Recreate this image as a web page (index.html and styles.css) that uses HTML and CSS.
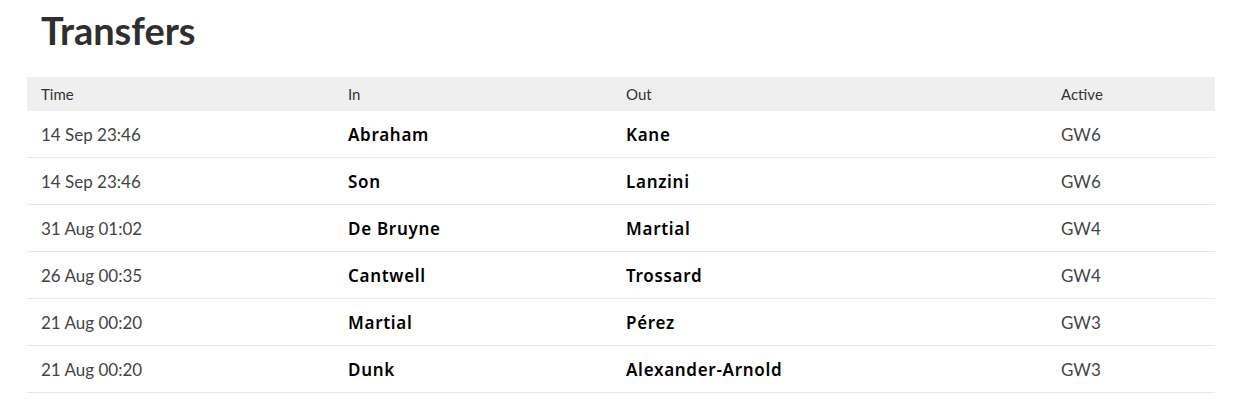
FILE: index.html
```html
<!DOCTYPE html>
<html>
<head>
<meta charset="utf-8">
<link rel="stylesheet" href="styles.css">
</head>
<body>
<div class="wrap">
  <h2 class="title">Transfers</h2>
  <table class="transfers">
    <colgroup>
      <col class="c-time"><col class="c-in"><col class="c-out"><col class="c-active">
    </colgroup>
    <thead>
      <tr><th>Time</th><th>In</th><th>Out</th><th>Active</th></tr>
    </thead>
    <tbody>
      <tr><td class="muted">14 Sep 23:46</td><td class="name">Abraham</td><td class="name">Kane</td><td class="muted">GW6</td></tr>
      <tr><td class="muted">14 Sep 23:46</td><td class="name">Son</td><td class="name">Lanzini</td><td class="muted">GW6</td></tr>
      <tr><td class="muted">31 Aug 01:02</td><td class="name">De Bruyne</td><td class="name">Martial</td><td class="muted">GW4</td></tr>
      <tr><td class="muted">26 Aug 00:35</td><td class="name">Cantwell</td><td class="name">Trossard</td><td class="muted">GW4</td></tr>
      <tr><td class="muted">21 Aug 00:20</td><td class="name">Martial</td><td class="name">Pérez</td><td class="muted">GW3</td></tr>
      <tr><td class="muted">21 Aug 00:20</td><td class="name">Dunk</td><td class="name">Alexander-Arnold</td><td class="muted">GW3</td></tr>
    </tbody>
  </table>
</div>
</body>
</html>
```
FILE: styles.css
```css
html, body { margin: 0; padding: 0; background: #fff; }
body { font-family: Lato, "Noto Sans", sans-serif; color: #222; }
.wrap { padding: 0 24px 0 27px; }
.title {
  margin: 0;
  padding: 8px 0 0 14px;
  height: 77px;
  box-sizing: border-box;
  font-size: 38px;
  font-weight: 700;
  line-height: 44px;
  color: #2f2f2f;
}
.transfers {
  width: 1188px;
  border-collapse: collapse;
  table-layout: fixed;
}
.c-time { width: 307px; }
.c-in { width: 278px; }
.c-out { width: 435px; }
.c-active { width: 168px; }
.transfers th {
  background: #efefef;
  height: 34px;
  padding: 0 14px;
  text-align: left;
  font-size: 15px;
  font-weight: 400;
  color: #333;
}
.transfers td {
  height: 46px;
  padding: 0 14px;
  border-bottom: 1px solid #e8e8e8;
  font-size: 17px;
}
.transfers td.muted { color: #444; }
.transfers td.name {
  color: #000;
  font-family: "Noto Sans", sans-serif;
  font-weight: 600;
  font-size: 17px;
  letter-spacing: 0.7px;
}
```
